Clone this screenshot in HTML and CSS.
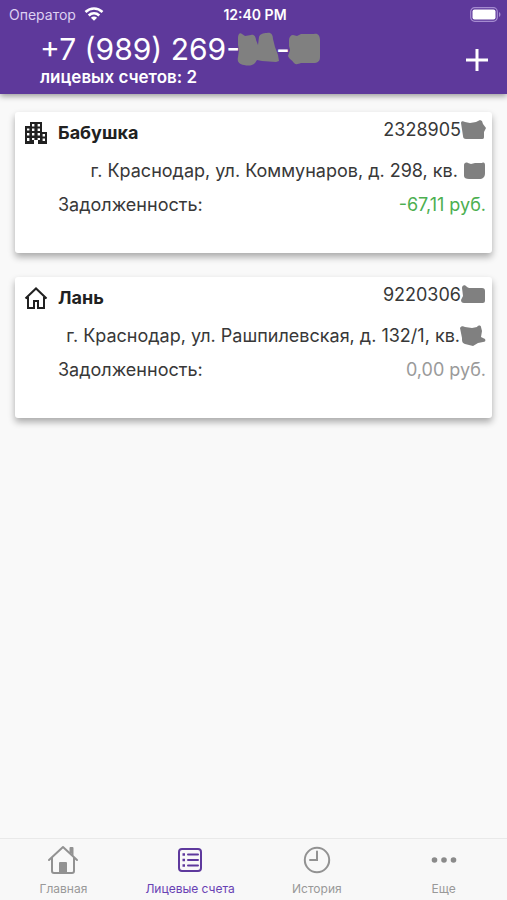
FILE: index.html
```html
<!DOCTYPE html>
<html lang="ru">
<head>
<meta charset="utf-8">
<meta name="viewport" content="width=device-width, initial-scale=1">
<title>Лицевые счета</title>
<link rel="stylesheet" href="styles.css">
</head>
<body>
<header class="header">
  <div class="status">
    <div class="carrier">
      <span>Оператор</span>
      <svg width="20" height="14" viewBox="0 0 20 14" fill="none" stroke="#fff" stroke-width="2.6" aria-hidden="true"><path d="M1.5 5C6.5.3 13.500.3 18.500 5"/><path d="M4.700 8.500c3.100-2.800 7.500-2.800 10.600 0"/><path d="M10 13.700 6.900 10.800c1.800-1.600 4.400-1.600 6.200 0z" fill="#fff" stroke="none"/></svg>
    </div>
    <time class="clock">12:40 PM</time>
    <svg class="battery" width="31" height="15" viewBox="0 0 31 15" aria-hidden="true"><rect x=".7" y=".7" width="26.600" height="13.600" rx="4" fill="none" stroke="#a58bd0" stroke-width="1.200"/><rect x="2.500" y="2.500" width="23" height="10" rx="2" fill="#fff"/><path d="M29 5c2 1 2 4 0 5z" fill="#a58bd0"/></svg>
  </div>
  <div class="toolbar">
    <div>
      <h1 class="phone"><span>+7 (989) 269-</span><svg class="mask" width="42" height="34" viewBox="0 0 42 34" fill="#808080" aria-hidden="true"><path d="M1 6C1 2 3 0 5 2l3 2 6-1c3-1 5 2 5 5l2 5 1-8c1-3 4-4 8-4 4-1 6 2 6 6l2 8 3 8 1 6-3 1-14-1-5-1-2 3c-3 3-7 3-11 2-5-1-7-3-6-8l1-7-1-5z"/></svg><span>-</span><svg class="mask" width="34" height="32" viewBox="0 0 34 32" fill="#808080" aria-hidden="true"><path d="M2 7C2 4 4 2 6 2l4 1 4-2h13c4-1 6 2 6 6v17c0 4-2 6-7 6H14c-3 1-5 2-7 0-2-3-5-4-6-7l2-6-1-4z"/></svg></h1>
      <p class="count">лицевых счетов: 2</p>
    </div>
    <button class="add" type="button" aria-label="Добавить"><svg width="24" height="24" viewBox="0 0 24 24" stroke="#fff" stroke-width="3" aria-hidden="true"><path d="M1 12h22M12 1v22"/></svg></button>
  </div>
</header>
<main class="accounts">
  <article class="card">
    <div class="row">
      <h2 class="name"><svg width="24" height="24" viewBox="0 0 24 24" fill="#212121" fill-rule="evenodd" aria-hidden="true"><path d="M6 1h12v10h5v12h-9v-4h-4v4H1V5h5zM8 3v2.400h2.400V3zM13.600 3v2.400H16V3zM3 7.500v2h2.400v-2zM8 7.500v2.400h2.400V7.500zM13.600 7.500v2.400H16V7.500zM3 12v2.400h2.400V12zM8 12v2.400h2.400V12zM13.600 12v2.400H16V12zM3 17v3h2.400v-3zM8 17v2h2.400v-2zM13.600 17v2H16v-2zM18.600 13v2.400H21V13zM18.600 17.500V20H21v-2.500z"/></svg><span>Бабушка</span></h2>
      <p class="number"><span>2328905</span><svg width="25" height="20" viewBox="0 0 25 20" fill="#808080" aria-hidden="true"><path d="M0 3c0-2 2-2 4-1l5 1 6-1 4-2 2 1 1 3 3 4-2 4v5c0 2-1 2-3 2H5c-2 0-3-1-3-3z"/></svg></p>
    </div>
    <p class="address"><span>г. Краснодар, ул. Коммунаров, д. 298, кв.&nbsp;</span><svg width="23" height="20" viewBox="0 0 23 20" fill="#808080" aria-hidden="true"><path d="M1 4c0-2 2-3 4-2l3 1 4-1h7c2-1 3 0 3 2v8c0 4-2 6-6 6H6c-3 0-5-1-5-3z"/></svg></p>
    <div class="row debt"><span>Задолженность:</span><span class="credit">-67,11 руб.</span></div>
  </article>
  <article class="card">
    <div class="row">
      <h2 class="name"><svg width="24" height="24" viewBox="0 0 24 24" fill="none" stroke="#212121" stroke-width="2" aria-hidden="true"><path d="m1.500 12.500 10.500-10 10.500 10M1.500 12H4v10h6v-7h4v7h6V12h2.500"/></svg><span>Лань</span></h2>
      <p class="number"><span>9220306</span><svg width="25" height="20" viewBox="0 0 25 20" fill="#808080" aria-hidden="true"><path d="M1 3c0-3 3-4 5-1l2 1h13c2 0 3 1 3 3v9c0 3-1 3-4 3H3c-2 0-3-1-3-3l2-4z"/></svg></p>
    </div>
    <p class="address"><span>г. Краснодар, ул. Рашпилевская, д. 132/1, кв.</span><svg width="26" height="22" viewBox="0 0 26 22" fill="#808080" aria-hidden="true"><path d="M0 3c1-2 3-2 5-1l7 1 5-1c1-2 4-2 4 0l1 4-1 6 4 2c1 2 0 3-2 3l-5 1-5 3-8-2c-3-1-3-3-3-6z"/></svg></p>
    <div class="row debt"><span>Задолженность:</span><span class="zero">0,00 руб.</span></div>
  </article>
</main>
<nav class="tabs">
  <a class="tab" href="#home"><svg width="32" height="30" viewBox="0 0 32 30" fill="none" stroke="#929292" stroke-width="2" stroke-linejoin="round" stroke-linecap="round" aria-hidden="true"><path d="M2 15 16 2l14 13M5 13v13q0 2 2 2h18q2 0 2-2V13"/><path d="M23.500 8V3h2v7" /><path d="M13 18h6v10h-6z" fill="#929292"/></svg><span>Главная</span></a>
  <a class="tab active" href="#accounts" aria-current="page"><svg width="32" height="30" viewBox="0 0 32 30" fill="none" stroke="#5e399d" stroke-width="2" aria-hidden="true"><rect x="5" y="4" width="22" height="22" rx="3"/><path d="M14 9.500h10M14 15h10M14 20.500h10" stroke-linecap="round"/><path d="M8.500 9.500H11M8.500 15H11M8.500 20.500H11" stroke-width="2.600"/></svg><span>Лицевые счета</span></a>
  <a class="tab" href="#history"><svg width="32" height="30" viewBox="0 0 32 30" fill="none" stroke="#929292" stroke-width="2" aria-hidden="true"><circle cx="16" cy="15" r="12.200"/><path d="M16 6.500V15H9" stroke-linecap="round"/></svg><span>История</span></a>
  <a class="tab" href="#more"><svg width="32" height="30" viewBox="0 0 32 30" fill="#8a8a8a" aria-hidden="true"><circle cx="6.500" cy="15" r="2.800"/><circle cx="16" cy="15" r="2.800"/><circle cx="25.500" cy="15" r="2.800"/></svg><span>Еще</span></a>
</nav>
</body>
</html>
```
FILE: styles.css
```css
* { box-sizing: border-box; }
body {
  margin: 0;
  min-height: 100vh;
  display: flex;
  flex-direction: column;
  background: #f9f9f9;
  color: #383838;
  font-family: Inter, "Liberation Sans", sans-serif;
}
h1, h2, p { margin: 0; }
svg { flex: none; display: block; }
.header {
  padding-bottom: 6px;
  background: #5e399b;
  color: #fff;
  box-shadow: 0 2px 6px rgba(0, 0, 0, .4);
}
.status {
  display: grid;
  grid-template-columns: 1fr auto 1fr;
  align-items: center;
  height: 28px;
  padding: 0 6px 0 9px;
  font-size: 14px;
}
.carrier { display: flex; align-items: center; gap: 8px; color: #ddd0f2; }
.clock { font-weight: 600; }
.battery { justify-self: end; }
.toolbar {
  display: flex;
  align-items: center;
  justify-content: space-between;
  padding: 4px 18px 0 40px;
}
.phone {
  display: flex;
  align-items: center;
  font-size: 30px;
  line-height: 34px;
  font-weight: 400;
}
.mask { margin: 0 -3px; }
.count { font-size: 17px; line-height: 22px; font-weight: 600; }
.add { padding: 0; border: 0; background: none; }
.accounts {
  flex: 1;
  display: flex;
  flex-direction: column;
  gap: 24px;
  padding: 18px 15px;
}
.card {
  min-height: 141px;
  padding: 8px 6px 0 9px;
  border-radius: 3px;
  background: #fff;
  box-shadow: 0 4px 7px rgba(0, 0, 0, .32);
  font-size: 18px;
  line-height: 24px;
}
.row { display: flex; justify-content: space-between; }
.name {
  display: flex;
  align-items: center;
  gap: 10px;
  padding-top: 1px;
  color: #212121;
  font-size: 18px;
  font-weight: 700;
}
.number { display: flex; align-items: center; height: 20px; }
.address {
  display: flex;
  align-items: center;
  justify-content: flex-end;
  height: 24px;
  margin-top: 14px;
}
.debt { margin-top: 10px; padding: 0 0 0 34px; }
.credit { color: #4caf50; }
.zero { color: #9a9a9a; }
.tabs {
  display: grid;
  grid-template-columns: repeat(4, 1fr);
  height: 62px;
  padding-top: 6px;
  border-top: 1px solid #e9e9e9;
  background: #f8f8f8;
}
.tab {
  display: flex;
  flex-direction: column;
  align-items: center;
  gap: 6px;
  color: #999;
  font-size: 12px;
  line-height: 16px;
  text-decoration: none;
}
.active { color: #6842b4; }
```
